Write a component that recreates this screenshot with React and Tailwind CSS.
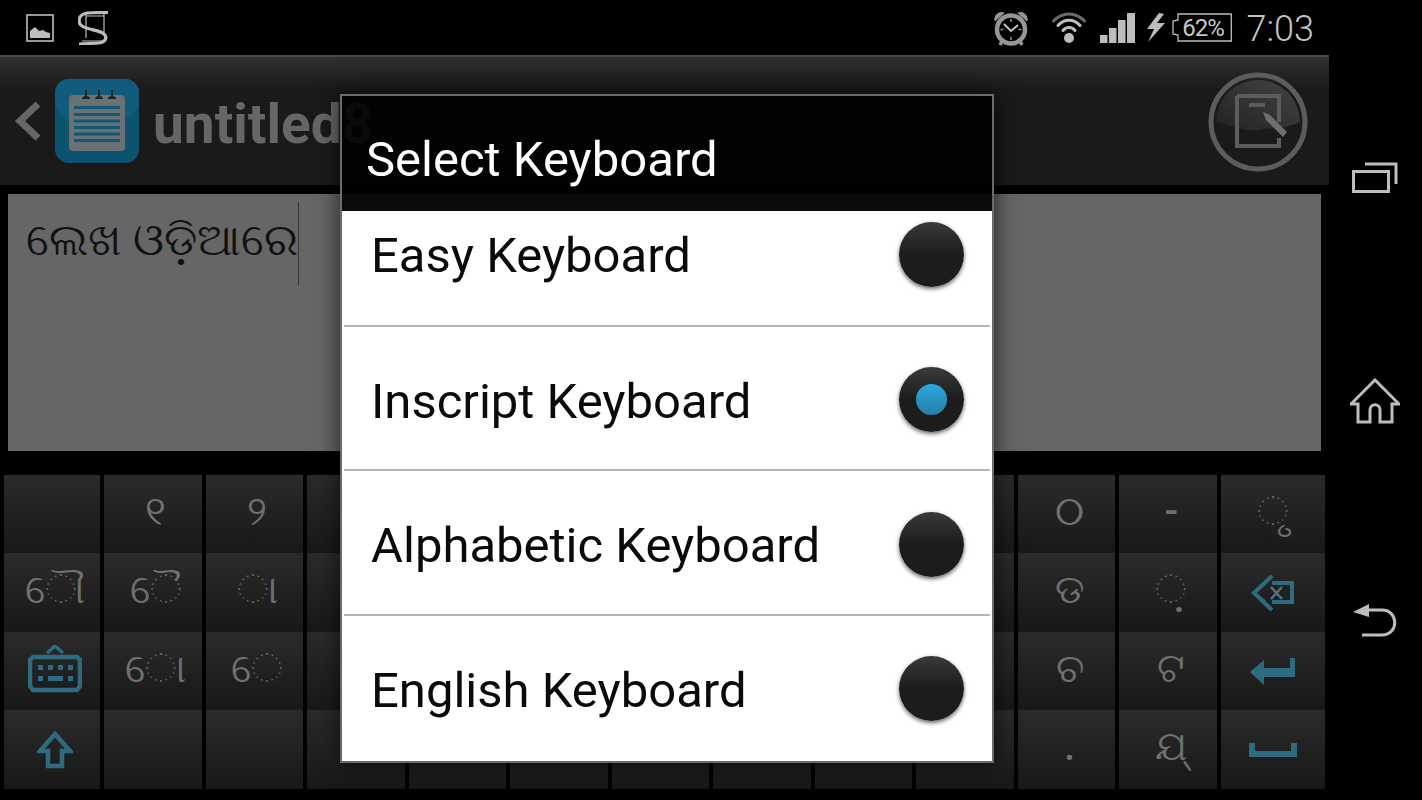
const C = "#bdbdbd";
const T = "#2f6b80";

function PictureIcon() {
  return (
    <svg width="28" height="28" viewBox="0 0 28 28">
      <rect x="1" y="1" width="26" height="26" fill="none" stroke={C} strokeWidth="1.6" />
      <path d="M4 24V17L9 13L13 17L17 16L20 18L24 19V24Z" fill={C} />
    </svg>
  );
}

function SLogo() {
  return (
    <svg width="30" height="34" viewBox="0 0 30 34" fill="none" stroke={C}>
      <path d="M8 4V27M26 3V21M8 5H26M4 30H26" strokeWidth="1.2" />
      <path d="M30 1.5C20 1.5 11 1.5 7 2.5C0 4.5 -0.5 12 4 15C10 19 22 19 26 23C30 27 27 31 21 32L1 33" strokeWidth="3.2" />
    </svg>
  );
}

function AlarmIcon() {
  const g = "#969696";
  return (
    <svg width="36" height="36" viewBox="0 0 36 36" fill="none">
      <circle cx="18" cy="19.5" r="14" stroke={g} strokeWidth="4.5" />
      <path d="M2 11C1 5 6 1 11 3ZM34 11C35 5 30 1 25 3Z" fill={g} stroke={g} />
      <path d="M7 35L9 31M29 35L27 31" stroke={g} strokeWidth="3.5" />
      <path d="M18 9V12M18 27V30M7.5 19.5H10.5M25.5 19.5H28.5" stroke={g} strokeWidth="1.5" />
      <path d="M11 14L18 21L25 15" stroke="#c8c8c8" strokeWidth="1.8" />
    </svg>
  );
}

function WifiIcon() {
  return (
    <svg width="34" height="32" viewBox="0 0 34 32" fill="none" strokeLinecap="round">
      <path d="M1.5 9C10 -0.5 24 -0.5 32.5 9" stroke="#6a6a6a" strokeWidth="3" />
      <path d="M6 13.5C12 6.5 22 6.5 28 13.5" stroke={C} strokeWidth="3" />
      <path d="M11 18.5C14 14.5 20 14.5 23 18.5" stroke={C} strokeWidth="3" />
      <circle cx="17" cy="26" r="5" fill={C} />
    </svg>
  );
}

function SignalIcon() {
  return (
    <svg width="35" height="30" viewBox="0 0 35 30" fill={C}>
      <rect x="0" y="22" width="7.5" height="8" />
      <rect x="9" y="15" width="7.5" height="15" />
      <rect x="18" y="7" width="7.5" height="23" />
      <rect x="27" y="0" width="8" height="30" />
    </svg>
  );
}

function BoltIcon() {
  return (
    <svg width="18" height="29" viewBox="0 0 18 29">
      <path d="M12 0L0 16H7L1 29L18 10H10L17 1Z" fill={C} />
    </svg>
  );
}

function Battery() {
  return (
    <div className="relative flex h-[29px] w-[60px] items-center justify-center">
      <svg className="absolute inset-0" width="60" height="29" viewBox="0 0 60 29" fill="none" stroke={C} strokeWidth="1.3">
        <path d="M6 1H59.3V28H6V22L1 21V8L6 7Z" />
      </svg>
      <span className="relative ml-[3px] text-[24px] font-normal leading-none tracking-[-1px] text-[#c8c8c8]">62%</span>
    </div>
  );
}

function AppIcon() {
  return (
    <div className="relative flex h-[84px] w-[84px] items-center justify-center overflow-hidden rounded-[14px] bg-[#0c5370]">
      <div className="absolute inset-x-0 top-0 h-[46px] rounded-b-[50%] bg-[#115c7a]" />
      <svg className="relative" width="60" height="62" viewBox="0 0 60 62">
        <rect x="2" y="5" width="56" height="56" rx="4" fill="#6b7073" />
        {[19, 32, 45].map((x) => (
          <g key={x}>
            <rect x={x - 1} y="0" width="2" height="7" fill="#222" />
            <path d={`M${x - 4} 9a4 3 0 0 1 8 0Z`} fill="#222" />
          </g>
        ))}
        {[16, 23, 29.5, 36, 42.5, 49].map((y) => (
          <rect key={y} x="7" y={y} width="46" height="3" fill="#0f5a78" />
        ))}
      </svg>
    </div>
  );
}

function EditButton() {
  return (
    <svg width="100" height="100" viewBox="0 0 100 100" fill="none">
      <defs>
        <linearGradient id="gloss" x1="0" y1="1" x2="1" y2="0">
          <stop offset="0" stopColor="#222" />
          <stop offset="1" stopColor="#444" />
        </linearGradient>
      </defs>
      <path d="M8 50A42 42 0 0 1 92 50C75 58 60 55 50 58C35 60 20 52 8 50Z" fill="url(#gloss)" />
      <circle cx="50" cy="50" r="47" stroke="#5c5c5c" strokeWidth="5" />
      <path d="M29 24H71V50M71 66V74H29V24" stroke="#5c5c5c" strokeWidth="4" />
      <path d="M41 33H57" stroke="#5c5c5c" strokeWidth="4" />
      <path d="M55 40L62 43L79 60L75 65L58 48Z" fill="#6e6e6e" />
    </svg>
  );
}

function KeyboardIcon() {
  return (
    <svg className="-mt-[5px]" width="54" height="48" viewBox="0 0 54 48" fill="none">
      <path d="M19 8L27 1L35 8" stroke={T} strokeWidth="3.5" />
      <path d="M5 12H49L52 15V41L49 45H5L2 41V15Z" stroke={T} strokeWidth="4.5" />
      {[12, 22, 32, 42].map((x) => (
        <rect key={x} x={x - 2} y="20" width="5" height="5" fill={T} />
      ))}
      <rect x="10" y="31" width="5" height="5" fill={T} />
      <rect x="20" y="31" width="15" height="5" fill={T} />
      <rect x="40" y="31" width="5" height="5" fill={T} />
    </svg>
  );
}

function ShiftIcon() {
  return (
    <svg width="36" height="38" viewBox="0 0 36 38" fill="none">
      <path d="M18 3L33 20H25V35H11V20H3Z" stroke={T} strokeWidth="4.5" />
    </svg>
  );
}

function BackspaceIcon() {
  return (
    <svg width="44" height="38" viewBox="0 0 44 38" fill="none">
      <path d="M21 2L3 19L21 36M21 9H41V28H21" stroke={T} strokeWidth="4" />
      <path d="M3 19L14 9M3 19L14 28" stroke={T} strokeWidth="3" />
      <path d="M20 13L31 25M31 13L20 25" stroke="#4d7382" strokeWidth="2.5" />
    </svg>
  );
}

function EnterIcon() {
  return (
    <svg width="46" height="28" viewBox="0 0 46 28">
      <path d="M0 15L14 3V11H40V1H45V20H14V28Z" fill={T} />
    </svg>
  );
}

function SpaceIcon() {
  return (
    <svg width="48" height="14" viewBox="0 0 48 14">
      <path d="M0 0H6V8H42V0H48V14H0Z" fill={T} />
    </svg>
  );
}

function RecentIcon() {
  return (
    <svg width="46" height="32" viewBox="0 0 46 32" fill="none" stroke={C} strokeWidth="3">
      <rect x="1.5" y="9.5" width="35" height="20" />
      <path d="M13 2H44V22" />
    </svg>
  );
}

function HomeIcon() {
  return (
    <svg width="50" height="46" viewBox="0 0 50 46" fill="none" stroke={C} strokeWidth="3">
      <path d="M1 26L25 2L49 26H42V44H30V32C30 25 20 25 20 32V44H8V26Z" />
    </svg>
  );
}

function BackIcon() {
  return (
    <svg width="46" height="34" viewBox="0 0 46 34" fill="none">
      <path d="M1 8L17 0V13Z" fill={C} />
      <path d="M14 6H30C47 6 47 31 30 31H10" stroke={C} strokeWidth="3" />
    </svg>
  );
}

const keys = [
  ["", "୧", "୨", "", "", "", "", "", "", "୦", "-", "◌ୃ"],
  ["◌ୌ", "◌ୈ", "◌ା", "", "", "", "", "", "", "ଡ", "◌଼", <BackspaceIcon />],
  [<KeyboardIcon />, "◌ୋ", "◌େ", "", "", "", "", "", "", "ଚ", "ଟ", <EnterIcon />],
  [<ShiftIcon />, "", "", "", "", "", "", "", "", ".", "ଯ୍", <SpaceIcon />],
];

function Key({ children, last }) {
  const isText = typeof children === "string";
  return (
    <div className={`flex items-center justify-center bg-gradient-to-b from-[#2b2b2b] to-[#181818] text-[40px] font-medium leading-none text-[#707070] ${last ? "" : "pl-[6px]"} ${isText ? "pb-[5px]" : ""}`}>
      {children}
    </div>
  );
}

function Radio({ selected }) {
  return (
    <div className="flex h-[65px] w-[65px] items-center justify-center rounded-full bg-gradient-to-b from-[#3a3a3a] to-[#1c1c1c] to-50% shadow-[0_2px_4px_rgba(0,0,0,0.6)]">
      {selected && <div className="h-[31px] w-[31px] rounded-full bg-gradient-to-b from-[#2aa8de] to-[#257fa6]" />}
    </div>
  );
}

const options = ["Easy Keyboard", "Inscript Keyboard", "Alphabetic Keyboard", "English Keyboard"];

export default function App() {
  return (
    <div className="relative flex h-[800px] w-[1422px] overflow-hidden bg-black font-[Roboto,'Noto_Sans',sans-serif]">
      <div className="flex w-[1329px] flex-col">
        <div className="flex h-[55px] items-center pl-[26px] pr-[15px]">
          <PictureIcon />
          <div className="ml-[24px]"><SLogo /></div>
          <div className="ml-auto flex items-center">
            <AlarmIcon />
            <div className="ml-[23px]"><WifiIcon /></div>
            <div className="ml-[14px]"><SignalIcon /></div>
            <div className="ml-[12px]"><BoltIcon /></div>
            <div className="ml-[7px]"><Battery /></div>
            <span className="ml-[15px] mt-[2px] text-[36px] font-light leading-none text-[#c4c4c4]">7:03</span>
          </div>
        </div>

        <div className="flex h-[130px] items-center border-t-2 border-[#4a4a4a] bg-gradient-to-b from-[#303030] via-[#1a1a1a] via-25% to-[#1a1a1a] pl-[14px] pr-[21px]">
          <svg width="28" height="40" viewBox="0 0 28 40" fill="none">
            <path d="M24 3L6 20L24 37" stroke="#666" strokeWidth="7" />
          </svg>
          <div className="ml-[13px]"><AppIcon /></div>
          <span className="ml-[14px] mt-[6px] text-[55px] font-bold leading-none text-[#666]">untitled8</span>
          <div className="ml-auto mt-[2px]"><EditButton /></div>
        </div>

        <div className="mx-[8px] mt-[9px] h-[257px] bg-[#666] pl-[18px] pt-[8px]">
          <div className="flex h-[83px] items-start">
            <span className="mt-[15px] text-[45px] leading-none text-[#111]">ଲେଖ ଓଡ଼ିଆରେ</span>
            <div className="h-[83px] w-[1px] bg-[#333]" />
          </div>
        </div>

        <div className="ml-[4px] mt-[24px] grid h-[314px] w-[1321px] grid-cols-[96px_repeat(11,minmax(0,1fr))_104px] grid-rows-[78px_79px_78px_79px] gap-x-[4px]">
          {keys.map((row, r) =>
            [...row.slice(0, 9), "", ...row.slice(9)].map((k, c) => (
              <Key key={`${r}-${c}`} last={c === 12}>{k}</Key>
            ))
          )}
        </div>
      </div>

      <div className="flex w-[93px] flex-col items-center pr-[2px] pt-[162px]">
        <div className="flex h-[32px] items-center"><RecentIcon /></div>
        <div className="mt-[184px] flex h-[46px] items-center"><HomeIcon /></div>
        <div className="mt-[180px] flex h-[34px] items-center"><BackIcon /></div>
      </div>

      <div className="absolute left-[340px] top-[94px] flex h-[669px] w-[654px] flex-col border-2 border-[#6b6b6b] shadow-[0_0_22px_rgba(0,0,0,0.65)]">
        <div className="flex h-[115px] items-start bg-black/90 pl-[24px] pt-[36px]">
          <span className="text-[49px] leading-[56px] text-white">Select Keyboard</span>
        </div>
        <div className="flex-1 overflow-hidden bg-white">
          <div className="-mt-[31px]">
            {options.map((o, i) => (
              <div key={o} className={`mx-[2px] flex h-[144.5px] items-center pl-[27px] pr-[26px] ${i > 0 ? "border-t-2 border-[#b5b5b5]" : ""}`}>
                <span className="mt-[7px] text-[49px] leading-none text-[#0a0a0a]">{o}</span>
                <div className="ml-auto mt-[4px]"><Radio selected={i === 1} /></div>
              </div>
            ))}
          </div>
        </div>
      </div>
    </div>
  );
}
